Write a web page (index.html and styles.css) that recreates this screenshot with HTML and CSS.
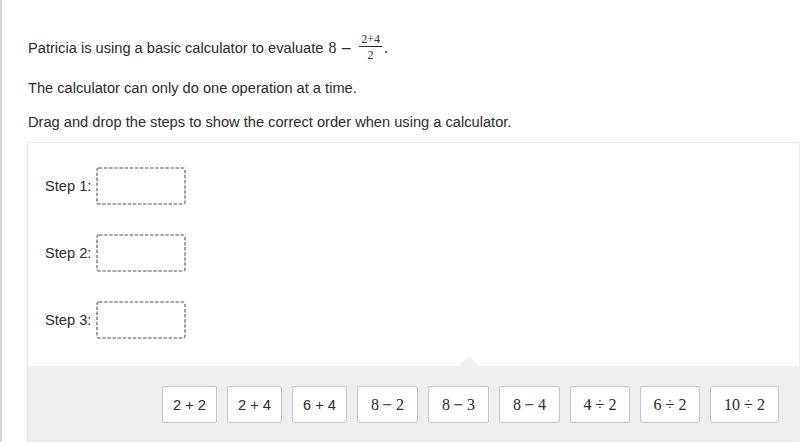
FILE: index.html
```html
<!DOCTYPE html>
<html>
<head>
<meta charset="utf-8">
<link rel="stylesheet" href="styles.css">
</head>
<body>
<div class="page">
  <p class="q first">Patricia is using a basic calculator to evaluate <span class="math">8<span class="op">−</span><span class="frac"><span class="num">2+4</span><span class="den">2</span></span>.</span></p>
  <p class="q">The calculator can only do one operation at a time.</p>
  <p class="q last">Drag and drop the steps to show the correct order when using a calculator.</p>
  <div class="panel">
    <div class="steps">
      <div class="step"><span class="label">Step 1:</span><span class="slot"><svg width="90" height="38" viewBox="0 0 90 38"><rect x="1" y="1" width="88" height="36" rx="2" /></svg></span></div>
      <div class="step"><span class="label">Step 2:</span><span class="slot"><svg width="90" height="38" viewBox="0 0 90 38"><rect x="1" y="1" width="88" height="36" rx="2" /></svg></span></div>
      <div class="step"><span class="label">Step 3:</span><span class="slot"><svg width="90" height="38" viewBox="0 0 90 38"><rect x="1" y="1" width="88" height="36" rx="2" /></svg></span></div>
    </div>
    <div class="tray">
      <span class="tile">2 + 2</span>
      <span class="tile">2 + 4</span>
      <span class="tile">6 + 4</span>
      <span class="tile m sub">8<span class="minus">−</span>2</span>
      <span class="tile m sub">8<span class="minus">−</span>3</span>
      <span class="tile m sub">8<span class="minus">−</span>4</span>
      <span class="tile m">4 ÷ 2</span>
      <span class="tile m">6 ÷ 2</span>
      <span class="tile m wide">10 ÷ 2</span>
    </div>
  </div>
</div>
</body>
</html>
```

FILE: styles.css
```css
html, body {
  margin: 0;
  padding: 0;
  background: #fff;
}
body {
  font-family: "Liberation Sans", Arial, sans-serif;
  color: #2b2b2b;
  height: 442px;
  overflow: hidden;
}
.page {
  border-left: 2px solid #d6d6d6;
  padding: 31px 0 0 26px;
  height: 442px;
  box-sizing: border-box;
}
.q {
  font-size: 14.65px;
  line-height: 20px;
  margin: 0 0 14px;
}
.q.first {
  margin-bottom: 13px;
  height: 34px;
  display: flex;
  align-items: center;
  white-space: pre;
}
.q.last {
  margin-bottom: 10px;
}
.math {
  font-family: "Liberation Serif", "Times New Roman", serif;
  font-size: 16px;
  display: inline-flex;
  align-items: center;
  margin-left: 1px;
}
.op {
  font-family: "DejaVu Serif", serif;
  font-size: 14px;
  margin: 0 6px 0 4px;
}
.frac {
  display: inline-flex;
  flex-direction: column;
  align-items: center;
  font-size: 12px;
  line-height: 12px;
  margin: 0 2px 0 1px;
  position: relative;
  top: -1px;
}
.num {
  padding: 0 2px 1px;
  border-bottom: 1px solid #2b2b2b;
}
.den {
  padding-top: 2px;
}
.panel {
  margin-left: -1px;
  border: 1px solid #e6e6e6;
  border-right-color: #eee;
}
.steps {
  padding: 24px 0 27px 17px;
  display: flex;
  flex-direction: column;
  gap: 29px;
}
.step {
  display: flex;
  align-items: center;
  font-size: 14.65px;
}
.label {
  width: 51px;
}
.slot {
  display: block;
  width: 90px;
  height: 38px;
}
.slot svg {
  display: block;
}
.slot rect {
  fill: none;
  stroke: #8a8a8a;
  stroke-width: 1.6;
  stroke-dasharray: 3.5 1.6;
}
.tray {
  position: relative;
  background: #efefef;
  display: flex;
  justify-content: flex-end;
  gap: 10px;
  padding: 20px 20px 18px;
}
.tray::before {
  content: "";
  position: absolute;
  top: -10px;
  left: 431px;
  border-left: 10px solid transparent;
  border-right: 10px solid transparent;
  border-bottom: 10px solid #efefef;
}
.tile {
  display: flex;
  align-items: center;
  justify-content: center;
  box-sizing: border-box;
  width: 55px;
  height: 37px;
  padding: 0;
  background: #fff;
  border: 1px solid #c4c4c4;
  border-radius: 2px;
  font-size: 14.65px;
  color: #2b2b2b;
  white-space: pre;
}
.tile.m {
  font-family: "Liberation Serif", "Times New Roman", serif;
  font-size: 16px;
  width: 60px;
}
.tile.sub {
  width: 61px;
}
.tile.wide {
  width: 69px;
}
.minus {
  font-family: "DejaVu Serif", serif;
  font-size: 13px;
  margin: 0 3px;
}
```
